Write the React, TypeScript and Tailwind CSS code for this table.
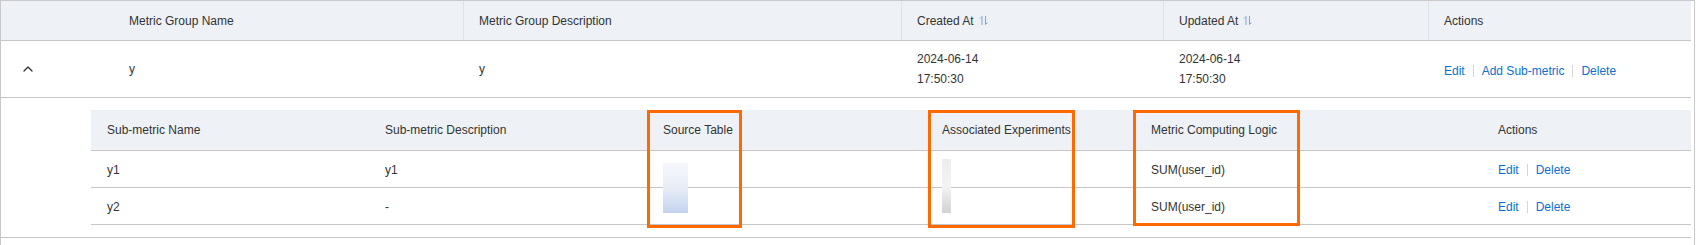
import { ChevronUp } from "lucide-react";

const mainCols = [
  { key: "name", label: "Metric Group Name", width: "w-[350px]", sort: false },
  { key: "desc", label: "Metric Group Description", width: "w-[438px]", sort: false },
  { key: "created", label: "Created At", width: "w-[262px]", sort: true },
  { key: "updated", label: "Updated At", width: "w-[265px]", sort: true },
  { key: "actions", label: "Actions", width: "w-[263px]", sort: false },
];

const subRows = [
  { name: "y1", desc: "y1", logic: "SUM(user_id)" },
  { name: "y2", desc: "-", logic: "SUM(user_id)" },
];

function SortIcon() {
  return (
    <svg width="10" height="11" viewBox="0 0 10 11" className="ml-[5px] inline-block">
      <path d="M3 10V1.5L1 3.5" fill="none" stroke="#7da3d6" strokeWidth="1" />
      <path d="M6.5 1v8.5l2-2" fill="none" stroke="#7da3d6" strokeWidth="1" />
    </svg>
  );
}

function Sep() {
  return <span className="mx-2 inline-block h-[12px] w-px bg-[#d6d6d6]" />;
}

function Link({ children }: { children: React.ReactNode }) {
  return <span className="text-[#0a6fd6] cursor-pointer">{children}</span>;
}

export default function App() {
  return (
    <div className="relative w-[1695px] h-[245px] bg-white border border-b-0 border-[#c9c9c9] font-['Liberation_Sans',Arial,sans-serif] text-[12px] text-[#333]">
      <div className="w-[1690px]">
        {/* Header */}
        <div className="flex h-[40px] bg-[#eef1f6] border-b border-[#c6c6c6]">
          <div className="w-[112px]" />
          {mainCols.map((c, i) => (
            <div
              key={c.key}
              className={`${c.width} flex items-center ${
                i === 0 ? "pl-4" : "border-l border-[#dbe3ee] pl-[15px]"
              }`}
            >
              {c.label}
              {c.sort && <SortIcon />}
            </div>
          ))}
        </div>

        {/* Row */}
        <div className="flex h-[57px] border-b border-[#c6c6c6]">
          <div className="w-[112px] flex items-center pl-[19px]">
            <ChevronUp className="w-4 h-4 text-[#333]" strokeWidth={2} />
          </div>
          <div className="w-[350px] flex items-center pl-4">y</div>
          <div className="w-[438px] flex items-center pl-4">y</div>
          <div className="w-[262px] flex flex-col justify-center pl-4 leading-[20px]">
            <span>2024-06-14</span>
            <span>17:50:30</span>
          </div>
          <div className="w-[265px] flex flex-col justify-center pl-4 leading-[20px]">
            <span>2024-06-14</span>
            <span>17:50:30</span>
          </div>
          <div className="w-[263px] flex items-center pl-4 pt-[3px]">
            <Link>Edit</Link>
            <Sep />
            <Link>Add Sub-metric</Link>
            <Sep />
            <Link>Delete</Link>
          </div>
        </div>

        {/* Expanded sub-table */}
        <div className="pl-[90px] pt-[12px] pb-[12px] border-b border-[#c6c6c6]">
          <div className="w-[1600px]">
            <div className="flex h-[41px] bg-[#eef1f6] border-b border-[#c6c6c6] items-center">
              <div className="w-[278px] pl-4">Sub-metric Name</div>
              <div className="w-[278px] pl-4">Sub-metric Description</div>
              <div className="w-[279px] pl-4">Source Table</div>
              <div className="w-[209px] pl-4">Associated Experiments</div>
              <div className="w-[347px] pl-4">Metric Computing Logic</div>
              <div className="w-[209px] pl-4">Actions</div>
            </div>
            {subRows.map((r) => (
              <div key={r.name} className="flex h-[37px] border-b border-[#c6c6c6] items-center pt-[2px]">
                <div className="w-[278px] pl-4">{r.name}</div>
                <div className="w-[278px] pl-4">{r.desc}</div>
                <div className="w-[279px] pl-4" />
                <div className="w-[209px] pl-4" />
                <div className="w-[347px] pl-4">{r.logic}</div>
                <div className="w-[209px] pl-4 flex items-center">
                  <Link>Edit</Link>
                  <Sep />
                  <Link>Delete</Link>
                </div>
              </div>
            ))}
          </div>
        </div>
      </div>

      {/* Redacted values */}
      <div className="absolute left-[662px] top-[162px] w-[25px] h-[50px] bg-gradient-to-b from-[#f5f7fc] via-[#e8edf7] to-[#c3d3ef]" />
      <div className="absolute left-[941px] top-[158px] w-[9px] h-[54px] bg-gradient-to-b from-[#ececec] via-[#f4f4f4] to-[#d2d2d2]" />

      {/* Annotation boxes */}
      <div className="absolute left-[646px] top-[109px] w-[95px] h-[118px] border-[3px] border-[#ff6a00]" />
      <div className="absolute left-[927px] top-[109px] w-[147px] h-[118px] border-[3px] border-[#ff6a00]" />
      <div className="absolute left-[1132px] top-[109px] w-[167px] h-[116px] border-[3px] border-[#ff6a00]" />
    </div>
  );
}
